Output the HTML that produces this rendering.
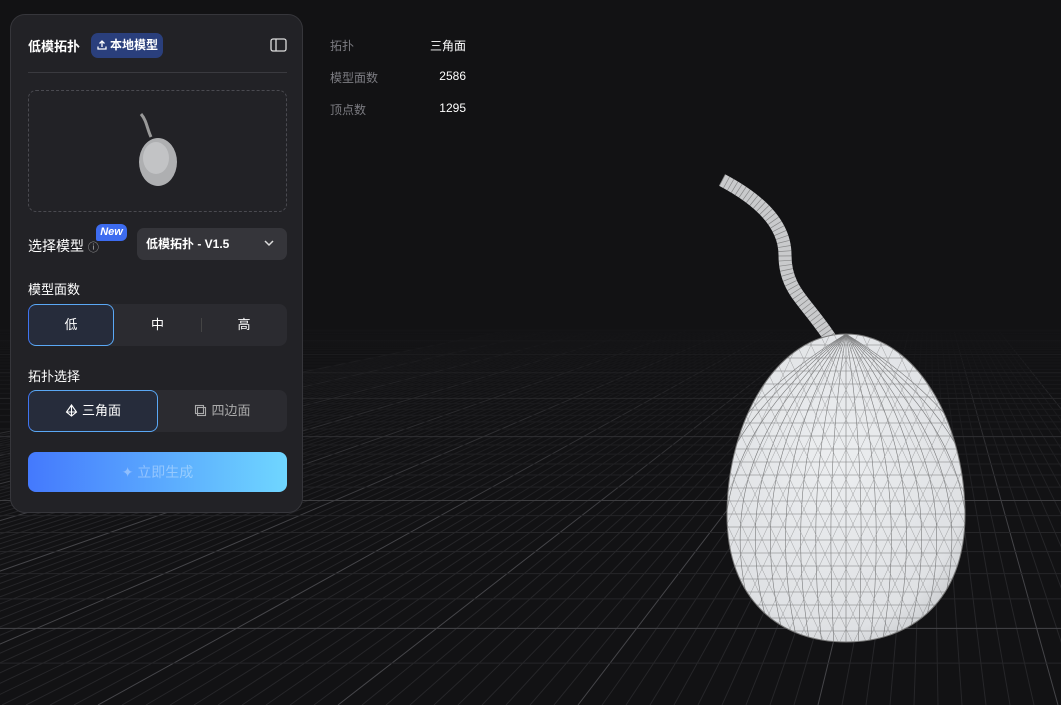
<!DOCTYPE html>
<html><head><meta charset="utf-8"><style>
*{margin:0;padding:0;box-sizing:border-box}
body{width:1061px;height:705px;overflow:hidden;background:#121214;font-family:"Liberation Sans","Noto Sans CJK SC",sans-serif;color:#fff;position:relative}
#bg{position:absolute;left:0;top:0}
.panel{position:absolute;left:10px;top:14px;width:293px;height:499px;background:#222226;border:1px solid #36363b;border-radius:15px}
.abs{position:absolute}
.stats{position:absolute;left:330px;font-size:12px;color:#7c7c82;width:136px}
.stats span{position:absolute;right:0;color:#fff}
.seg{position:absolute;left:17px;width:259px;height:42px;background:#2b2b30;border-radius:8px}
.sel{position:absolute;left:0;top:0;height:42px;background:#262c3b;border-radius:8px;border:1px solid #5aa8f5;border-left-color:#3f74f0}
.lbl{position:absolute;font-size:13px;text-align:center;line-height:42px;top:0}
</style></head><body>
<svg id="bg" width="1061" height="705">
<defs><linearGradient id="fade" x1="0" y1="0" x2="0" y2="1"><stop offset="0" stop-color="#121214" stop-opacity="1"/><stop offset="0.45" stop-color="#121214" stop-opacity="0.5"/><stop offset="1" stop-color="#121214" stop-opacity="0"/></linearGradient></defs>
<g id="grid"></g>
<rect x="0" y="320" width="1061" height="220" fill="url(#fade)"/>
</svg>

<div class="stats" style="top:37px">拓扑<span>三角面</span></div>
<div class="stats" style="top:69px">模型面数<span>2586</span></div>
<div class="stats" style="top:101px">顶点数<span>1295</span></div>

<svg class="abs" style="left:0;top:0" width="1061" height="705">
<defs>
<clipPath id="eg"><path id="egp" d="M846,334 C914,334 965,420 965,515 C965,600 912,642 846,642 C780,642 727,600 727,515 C727,420 778,334 846,334Z"/></clipPath>
<radialGradient id="eggf" cx="0.45" cy="0.4" r="0.7"><stop offset="0" stop-color="#eceef0"/><stop offset="0.8" stop-color="#dfe1e4"/><stop offset="1" stop-color="#c4c6c9"/></radialGradient>
</defs>
<path d="M722,180 C760,200 785,225 785,255 C785,290 805,300 830,338" fill="none" stroke="#c9cacc" stroke-width="13"/>
<path d="M722,180 C760,200 785,225 785,255 C785,290 805,300 830,338" fill="none" stroke="#444" stroke-width="13" stroke-dasharray="0.7 4" opacity=".5"/>
<path d="M846,334 C914,334 965,420 965,515 C965,600 912,642 846,642 C780,642 727,600 727,515 C727,420 778,334 846,334Z" fill="url(#eggf)"/>
<g id="mesh" clip-path="url(#eg)" stroke="#333" stroke-width=".6" fill="none" opacity=".6"></g>
<path d="M846,334 C914,334 965,420 965,515 C965,600 912,642 846,642 C780,642 727,600 727,515 C727,420 778,334 846,334Z" fill="none" stroke="#777" stroke-width="1"/>
</svg>

<div class="panel">
  <div class="abs" style="left:17px;top:21px;font-size:13px;font-weight:bold">低模拓扑</div>
  <div class="abs" style="left:80px;top:18px;width:72px;height:25px;background:#2a3f7c;border-radius:7px;font-size:12px;font-weight:bold;line-height:25px;padding-left:19px">本地模型
    <svg class="abs" style="left:5px;top:6px" width="12" height="12" viewBox="0 0 12 12" fill="none" stroke="#fff" stroke-width="1.3"><path d="M6 8V2M3.5 4.5L6 2l2.5 2.5M2 7.5V10h8V7.5"/></svg>
  </div>
  <svg class="abs" style="left:259px;top:23px" width="17" height="14" viewBox="0 0 17 14" fill="none" stroke="#ddd" stroke-width="1.3"><rect x="1" y="1" width="15" height="12" rx="2"/><path d="M6 1v12"/></svg>
  <div class="abs" style="left:17px;top:57px;width:259px;height:1px;background:#3a3a3f"></div>
  <div class="abs" style="left:17px;top:75px;width:259px;height:122px;border:1px dashed #4a4a50;border-radius:8px">
    <svg class="abs" style="left:100px;top:20px" width="60" height="80"><path d="M12,3 C18,10 18,18 22,26" stroke="#999" stroke-width="3" fill="none"/><ellipse cx="29" cy="51" rx="19" ry="24" fill="#aeafb1"/><ellipse cx="27" cy="47" rx="13" ry="16" fill="#c2c3c5"/></svg>
  </div>
  <div class="abs" style="left:17px;top:221px;font-size:14px">选择模型 <span style="font-size:11px;color:#aaa">ⓘ</span></div>
  <div class="abs" style="left:85px;top:209px;width:31px;height:17px;background:#3d6cf0;border-radius:6px 6px 6px 2px;font-size:11px;font-style:italic;font-weight:bold;text-align:center;line-height:17px">New</div>
  <div class="abs" style="left:126px;top:213px;width:150px;height:32px;background:#35353a;border-radius:7px;font-size:12px;font-weight:bold;line-height:32px;padding-left:9px">低模拓扑 - V1.5
    <svg class="abs" style="left:127px;top:12px" width="10" height="7" fill="none" stroke="#ddd" stroke-width="1.5"><path d="M1 1l4 4 4-4"/></svg>
  </div>
  <div class="abs" style="left:17px;top:264px;font-size:13px">模型面数</div>
  <div class="seg" style="top:289px">
    <div class="sel" style="width:86px"></div>
    <div class="lbl" style="left:0;width:86px">低</div>
    <div class="lbl" style="left:86px;width:87px">中</div>
    <div class="abs" style="left:173px;top:14px;width:1px;height:14px;background:#444"></div>
    <div class="lbl" style="left:173px;width:86px">高</div>
  </div>
  <div class="abs" style="left:17px;top:351px;font-size:13px">拓扑选择</div>
  <div class="seg" style="top:375px">
    <div class="sel" style="width:130px"></div>
    <div class="lbl" style="left:0;width:130px"><svg style="vertical-align:-2px;margin-right:4px" width="13" height="13" viewBox="0 0 13 13" fill="none" stroke="#fff" stroke-width="1.1"><path d="M6.5 1L1.5 8l5 4 5-4z M1.5 8h10 M6.5 1v11"/></svg>三角面</div>
    <div class="lbl" style="left:130px;width:129px;color:#aaa"><svg style="vertical-align:-2px;margin-right:4px" width="13" height="13" viewBox="0 0 13 13" fill="none" stroke="#aaa" stroke-width="1.1"><rect x="1.5" y="1.5" width="8" height="8"/><rect x="3.5" y="3.5" width="8" height="8"/></svg>四边面</div>
  </div>
  <div class="abs" style="left:17px;top:437px;width:259px;height:40px;border-radius:8px;background:linear-gradient(90deg,#4479fd,#6fd6ff);font-size:14px;text-align:center;line-height:40px;color:rgba(255,255,255,.35)">✦ 立即生成</div>
</div>

<script>
var ns="http://www.w3.org/2000/svg",g=document.getElementById("grid");
function L(p,x1,y1,x2,y2,c,w){var l=document.createElementNS(ns,"line");l.setAttribute("x1",x1);l.setAttribute("y1",y1);l.setAttribute("x2",x2);l.setAttribute("y2",y2);l.setAttribute("stroke",c);l.setAttribute("stroke-width",w||1);p.appendChild(l);}
var vx=930,vy=245;
for(var i=-70;i<=40;i++){var bx=338+i*24;var maj=(i%10==0);
 var t=(330-vy)/(705-vy);var x0=vx+(bx-vx)*t;
 L(g,x0,330,bx,705,maj?"#454549":"#262629",1);}
for(var z=1;z<60;z++){var y=245+4600/(z+6);if(y>330&&y<705)L(g,0,y,1061,y,(z%6==0)?"#454549":"#262629",1);}
var m=document.getElementById("mesh");
for(var j=0;j<24;j++){var y=345+j*13;L(m,700,y,1000,y,"#333",.6);}
for(var j=-10;j<=10;j++){var p=document.createElementNS(ns,"path");p.setAttribute("d","M846,334 Q"+(846+j*22)+",470 "+(846+j*12)+",645");m.appendChild(p);}
for(var j=-25;j<=25;j++){L(m,846+j*14,330,846+j*14+150,650,"#555",.4);L(m,846+j*14,330,846+j*14-150,650,"#555",.4);}
</script>
</body></html>
